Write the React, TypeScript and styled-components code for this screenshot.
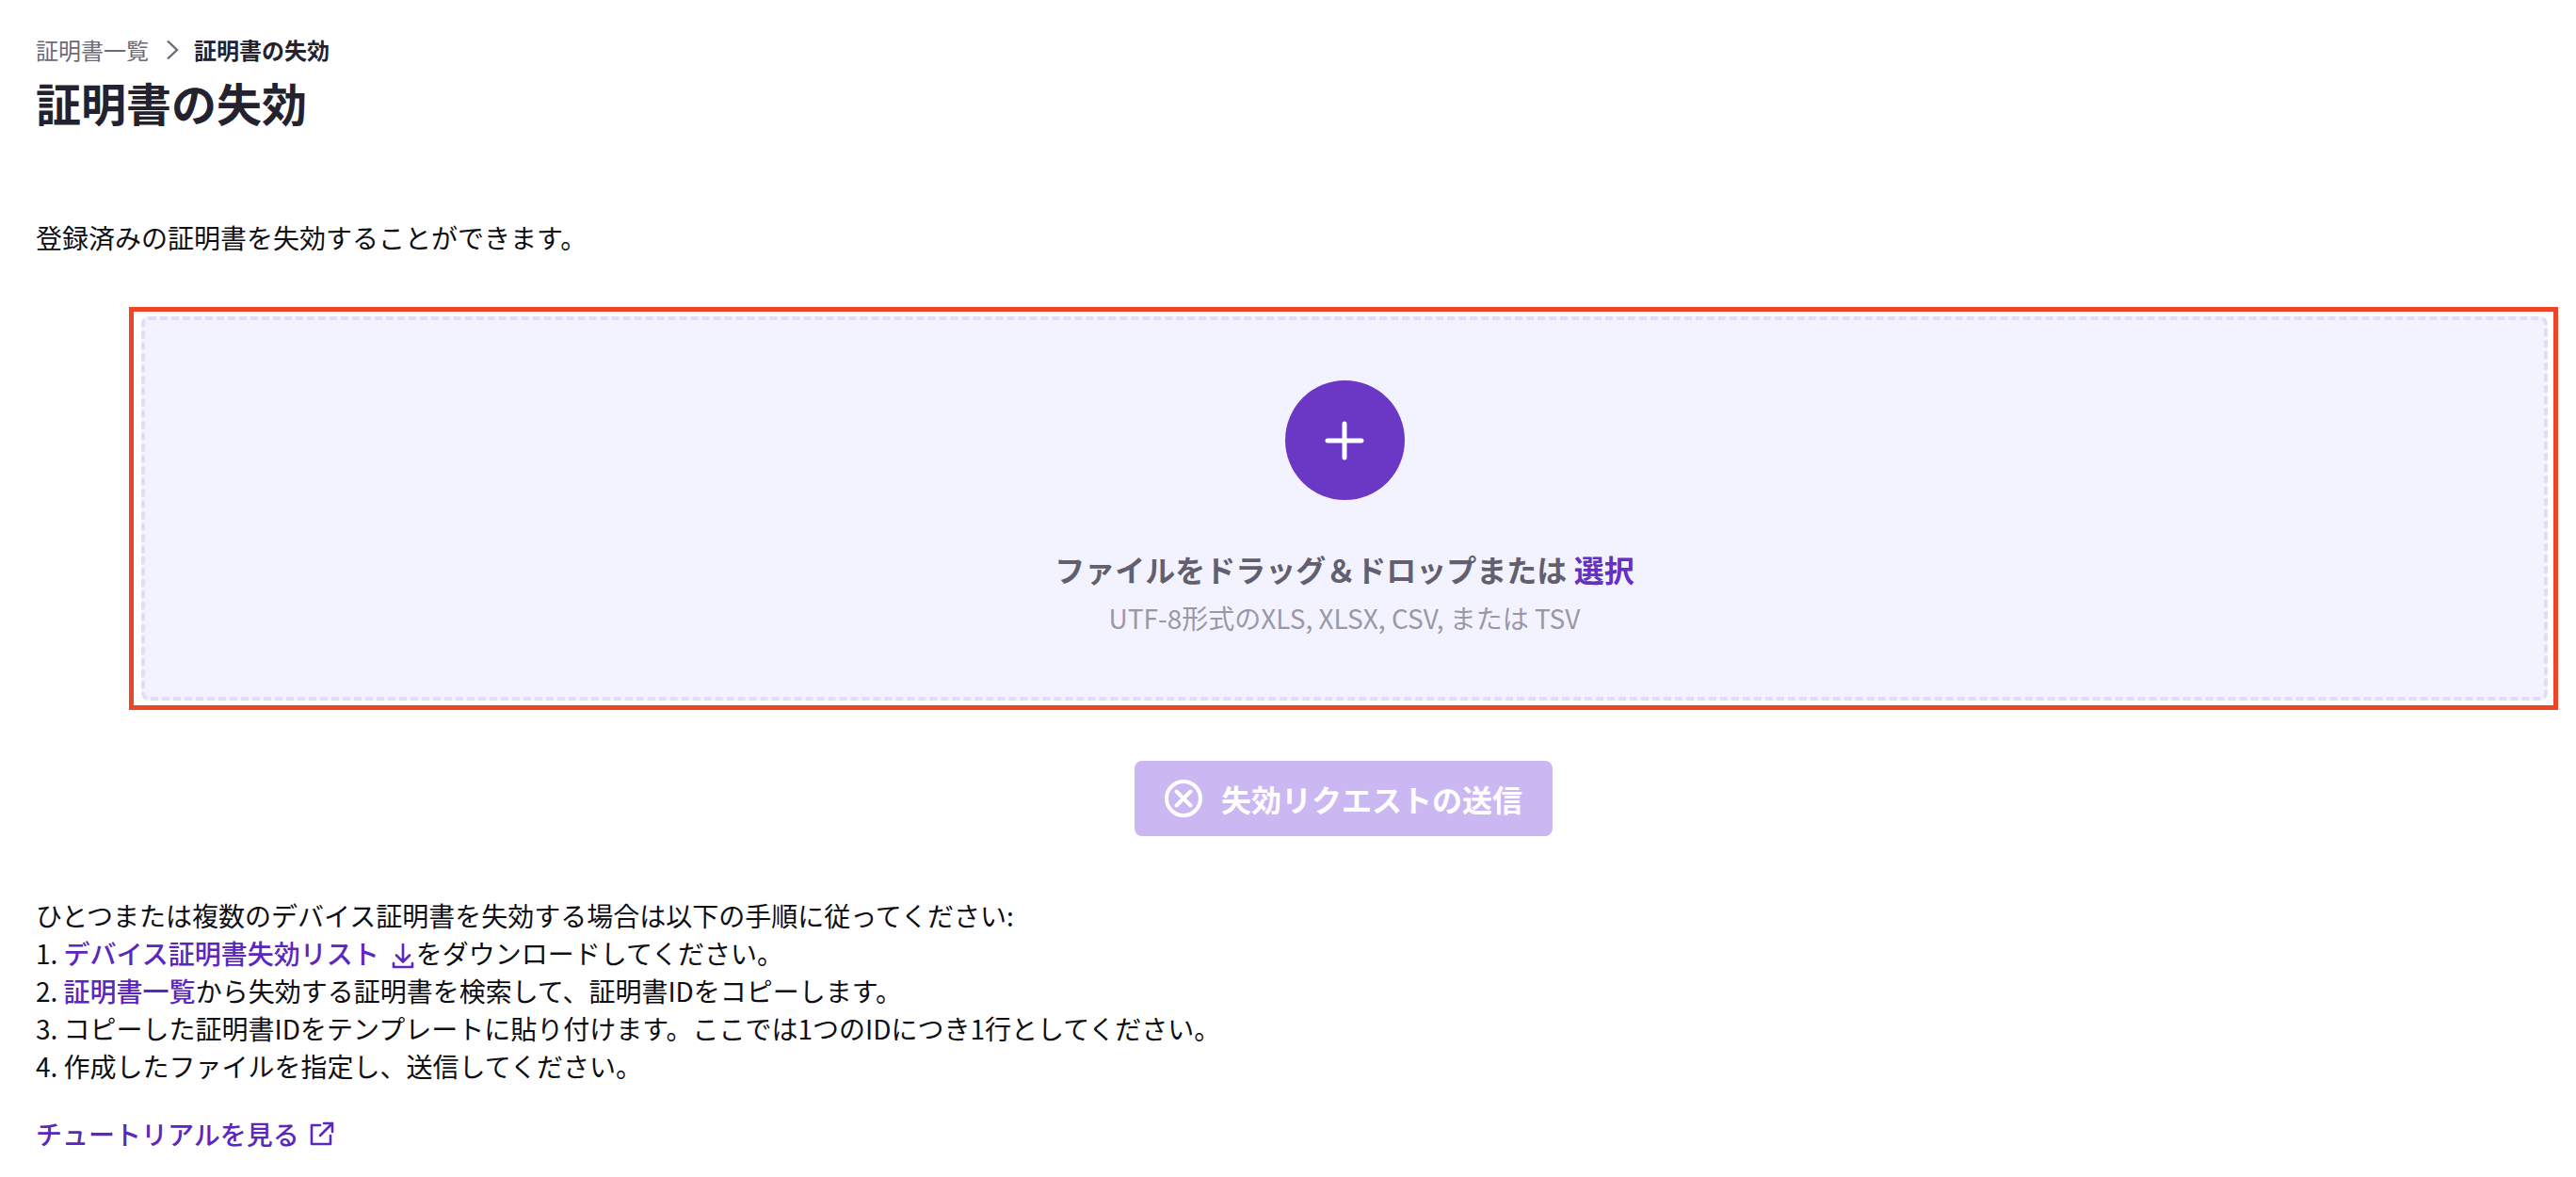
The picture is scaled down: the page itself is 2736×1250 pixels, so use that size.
import React from 'react';
import styled, { createGlobalStyle } from 'styled-components';

const GlobalStyle = createGlobalStyle`
  html, body {
    margin: 0;
    padding: 0;
    background: #ffffff;
  }

  body {
    font-family: "Noto Sans CJK JP", "Noto Sans", sans-serif;
    color: #0e0e12;
  }
`;

const Page = styled.div`
  width: 2736px;
  height: 1250px;
  box-sizing: border-box;
  padding: 36px 19px 0 38px;
  overflow: hidden;
`;

const Breadcrumbs = styled.nav`
  display: flex;
  align-items: center;
  gap: 14px;
  height: 34px;
  font-size: 24px;
  line-height: 34px;
`;

const Crumb = styled.a<{ $current?: boolean }>`
  color: ${(p) => (p.$current ? '#24222e' : '#6c6a78')};
  font-weight: ${(p) => (p.$current ? 700 : 400)};
`;

const Title = styled.h1`
  margin: 4px 0 0;
  font-size: 48px;
  line-height: 68px;
  font-weight: 700;
  color: #24222e;
`;

const Lead = styled.p`
  margin: 90px 0 0;
  font-size: 28px;
  line-height: 40px;
`;

const UploadSection = styled.section`
  margin: 54px 0 0 99px;
`;

const Frame = styled.div`
  padding: 5px 6px 5px 8px;
  border: 5px solid #ee4528;
`;

const DropZone = styled.div`
  height: 408px;
  box-sizing: border-box;
  border: 4px dashed #e3dcf9;
  border-radius: 8px;
  background: #f3f3ff;
  display: flex;
  flex-direction: column;
  align-items: center;
  padding-top: 64px;
`;

const AddCircle = styled.div`
  width: 127px;
  height: 127px;
  border-radius: 50%;
  background: #6b38c6;
  display: flex;
  align-items: center;
  justify-content: center;
`;

const DropText = styled.div`
  margin-top: 50px;
  font-size: 32px;
  line-height: 46px;
  font-weight: 700;
  color: #62606f;
`;

const SelectLink = styled.a`
  color: #6430c4;
`;

const DropHint = styled.div`
  margin-top: 9px;
  font-size: 28px;
  line-height: 40px;
  color: #9a98a6;
`;

const ButtonRow = styled.div`
  display: flex;
  justify-content: center;
  margin-top: 54px;
`;

const SubmitButton = styled.button`
  width: 444px;
  height: 80px;
  border: none;
  border-radius: 8px;
  background: #cbb8f2;
  color: #ffffff;
  font-family: inherit;
  font-size: 32px;
  font-weight: 700;
  display: flex;
  align-items: center;
  justify-content: center;
  gap: 20px;
  padding: 0;
`;

const Steps = styled.div`
  margin-top: 64px;
  font-size: 28px;
  line-height: 40px;
`;

const StepLine = styled.div`
  white-space: nowrap;
`;

const TextLink = styled.a`
  color: #5b27bd;
  font-weight: 500;
`;

const InlineIcon = styled.svg`
  display: inline-block;
  vertical-align: -5px;
  margin: 0 2px 0 13px;
`;

const Tutorial = styled.a`
  display: inline-flex;
  align-items: center;
  gap: 11px;
  margin-top: 32px;
  font-size: 28px;
  line-height: 40px;
  font-weight: 500;
  color: #5b27bd;
`;

const App: React.FC = () => {
  return (
    <>
      <GlobalStyle />
      <Page>
        <Breadcrumbs>
          <Crumb>証明書一覧</Crumb>
          <svg width="20" height="24" viewBox="0 0 20 24" fill="none">
            <path d="M6 2.5l10 9.5-10 9.5" stroke="#6c6a78" strokeWidth="2.4" />
          </svg>
          <Crumb $current>証明書の失効</Crumb>
        </Breadcrumbs>
        <Title>証明書の失効</Title>
        <Lead>登録済みの証明書を失効することができます。</Lead>
        <UploadSection>
          <Frame>
            <DropZone>
              <AddCircle>
                <svg width="44" height="44" viewBox="0 0 44 44" fill="none">
                  <path d="M22 4v36M4 22h36" stroke="#fff" strokeWidth="5" strokeLinecap="round" />
                </svg>
              </AddCircle>
              <DropText>
                ファイルをドラッグ＆ドロップまたは <SelectLink>選択</SelectLink>
              </DropText>
              <DropHint>UTF-8形式のXLS, XLSX, CSV, または TSV</DropHint>
            </DropZone>
          </Frame>
          <ButtonRow>
            <SubmitButton disabled>
              <svg width="40" height="40" viewBox="0 0 40 40" fill="none">
                <circle cx="20" cy="20" r="18" stroke="#fff" strokeWidth="4" />
                <path d="M12.5 12.5l15 15M27.5 12.5l-15 15" stroke="#fff" strokeWidth="4" strokeLinecap="round" />
              </svg>
              失効リクエストの送信
            </SubmitButton>
          </ButtonRow>
        </UploadSection>
        <Steps>
          <StepLine>ひとつまたは複数のデバイス証明書を失効する場合は以下の手順に従ってください:</StepLine>
          <StepLine>
            1. <TextLink>デバイス証明書失効リスト</TextLink>
            <InlineIcon width="24" height="28" viewBox="0 0 24 28" fill="none">
              <path d="M12 2v18M5 13.5l7 7 7-7M2 22v4h20v-4" stroke="#5b27bd" strokeWidth="2.6" strokeLinecap="round" strokeLinejoin="round" />
            </InlineIcon>
            をダウンロードしてください。
          </StepLine>
          <StepLine>
            2. <TextLink>証明書一覧</TextLink>から失効する証明書を検索して、証明書IDをコピーします。
          </StepLine>
          <StepLine>3. コピーした証明書IDをテンプレートに貼り付けます。ここでは1つのIDにつき1行としてください。</StepLine>
          <StepLine>4. 作成したファイルを指定し、送信してください。</StepLine>
        </Steps>
        <Tutorial>
          チュートリアルを見る
          <svg width="26" height="26" viewBox="0 0 26 26" fill="none">
            <path d="M11 4H2v20h20v-9M15 2h9v9M24 2L11 15" stroke="#5b27bd" strokeWidth="2.6" strokeLinecap="round" strokeLinejoin="round" />
          </svg>
        </Tutorial>
      </Page>
    </>
  );
};

export default App;
